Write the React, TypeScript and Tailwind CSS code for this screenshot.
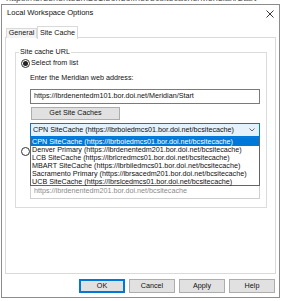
import React from 'react';

const font = { fontFamily: '"Liberation Sans", Arial, sans-serif' };

const caches = [
  'CPN SiteCache (https://lbrboiedmcs01.bor.doi.net/bcsitecache)',
  'Denver Primary (https://lbrdenentedm201.bor.doi.net/bcsitecache)',
  'LCB SiteCache (https://lbrlcredmcs01.bor.doi.net/bcsitecache)',
  'MBART SiteCache (https://lbrbiledmcs01.bor.doi.net/bcsitecache)',
  'Sacramento Primary (https://lbrsacedm201.bor.doi.net/bcsitecache)',
  'UCB SiteCache (https://lbrslcedmcs01.bor.doi.net/bcsitecache)',
];

const Radio: React.FC<{ checked?: boolean }> = ({ checked }) => (
  <span className="w-[9px] h-[9px] rounded-full border border-[#333] bg-white flex items-center justify-center shrink-0">
    {checked && <span className="w-[5px] h-[5px] rounded-full bg-[#222]" />}
  </span>
);

const DlgButton: React.FC<{ label: string; primary?: boolean }> = ({ label, primary }) => (
  <button
    className={`w-[46px] h-[14px] flex items-center justify-center bg-[#e1e1e1] text-[#111] leading-none ${
      primary ? 'border border-[#0078d7] shadow-[inset_0_0_0_1px_#0078d7]' : 'border border-[#adadad]'
    }`}
  >
    {label}
  </button>
);

export default function App() {
  return (
    <div className="w-[282px] h-[301px] bg-white overflow-hidden text-[7.2px] text-[#111]" style={font}>
      {/* bit of the window behind */}
      <div className="h-[4px] overflow-hidden pl-[6px]">
        <div className="-mt-[6px] leading-[9px] text-[9px] text-[#555] whitespace-nowrap">
          https://lbrdenentedm201.bor.doi.net/bcsitecache/Meridian/Start
        </div>
      </div>

      <div className="ml-[1px] w-[279px] h-[294px] border border-[#8c8c8c] bg-white flex flex-col">
        {/* title bar */}
        <div className="h-[16px] flex items-center justify-between pl-[5px] pr-[5px]">
          <span className="text-[7.6px]">Local Workspace Options</span>
          <svg width="8" height="8" viewBox="0 0 8 8" className="mt-[1px]">
            <path d="M0.5 0.5 L7.5 7.5 M7.5 0.5 L0.5 7.5" stroke="#222" strokeWidth="0.9" />
          </svg>
        </div>

        {/* tabs */}
        <div className="mt-[4px] ml-[4px] flex items-end h-[13px] relative z-10">
          <div className="w-[31px] h-[10px] border border-b-0 border-[#d9d9d9] bg-[#f4f4f4] flex items-center justify-center">
            General
          </div>
          <div className="w-[41px] h-[13px] border border-b-0 border-[#d9d9d9] bg-white flex items-start justify-center pt-[1px] -mb-px">
            Site Cache
          </div>
        </div>

        {/* tab panel */}
        <div className="ml-[3px] w-[271px] h-[237px] border border-[#d9d9d9] -mt-px">
          <div className="ml-[9px] mt-[14px] w-[252px] h-[156px] border border-[#dcdcdc] relative">
            <span className="absolute -top-[6px] left-[3px] bg-white px-[1px] leading-[10px]">Site cache URL</span>

            <div className="mt-[6px] ml-[5px] flex items-center gap-[1px] h-[9px]">
              <Radio checked />
              <span>Select from list</span>
            </div>

            <div className="mt-[5px] ml-[14px] h-[10px] leading-[10px]">Enter the Meridian web address:</div>

            <div className="mt-[6px] ml-[14px] w-[230px] h-[15px] border border-[#7a7a7a] flex items-center pl-[3px]">
              https://lbrdenentedm101.bor.doi.net/Meridian/Start
            </div>

            <button className="mt-[3px] ml-[15px] w-[89px] h-[13px] bg-[#e1e1e1] border border-[#adadad] flex items-center justify-center">
              Get Site Caches
            </button>

            <div className="mt-[3px] ml-[14px] w-[230px] h-[14px] border border-[#0078d7] bg-[#e5f1fb] flex items-center justify-between pl-[2px] pr-[4px]">
              <span>{caches[0]}</span>
              <svg width="6" height="4" viewBox="0 0 6 4">
                <path d="M0.5 0.5 L3 3 L5.5 0.5" stroke="#444" strokeWidth="0.8" fill="none" />
              </svg>
            </div>

            <div className="mt-[10px] ml-[5px] flex items-center h-[9px]">
              <Radio />
            </div>

            <div className="mt-[28px] ml-[14px] w-[230px] h-[15px] border border-[#cfcfcf] flex items-center pl-[3px] text-[#8a8a8a]">
              https://lbrdenentedm201.bor.doi.net/bcsitecache
            </div>

            {/* open combo list */}
            <div className="absolute top-[84px] left-[14px] w-[230px] h-[49px] border border-[#646464] bg-white flex flex-col">
              {caches.map((c, i) => (
                <div
                  key={c}
                  className={`h-[8px] leading-[8px] pl-[1px] whitespace-nowrap ${i === 0 ? 'bg-[#0078d7] text-white' : ''}`}
                >
                  {c}
                </div>
              ))}
            </div>
          </div>
        </div>

        {/* dialog buttons */}
        <div className="mt-[5px] flex justify-end gap-[4px] pr-[4px]">
          <DlgButton label="OK" primary />
          <DlgButton label="Cancel" />
          <DlgButton label="Apply" />
          <DlgButton label="Help" />
        </div>
      </div>
    </div>
  );
}
